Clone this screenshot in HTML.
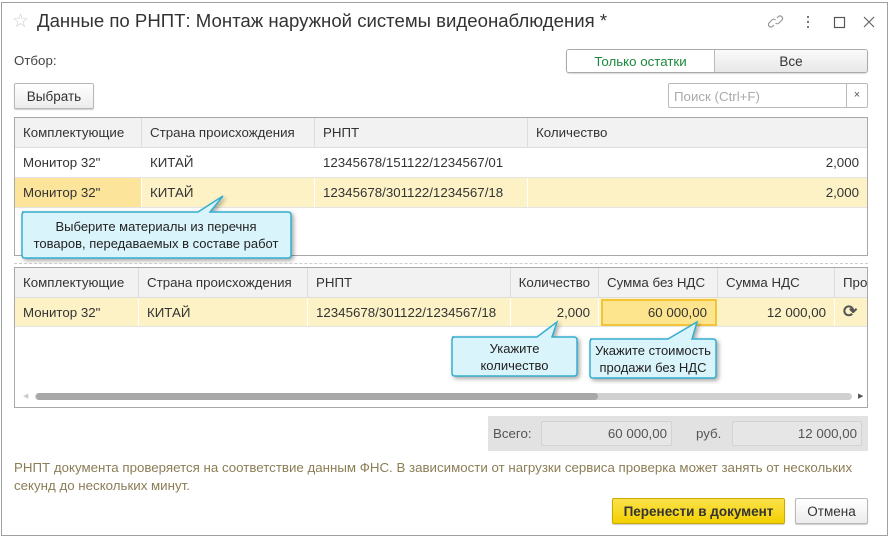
<!DOCTYPE html>
<html><head><meta charset="utf-8"><style>
*{margin:0;padding:0;box-sizing:border-box}
body{width:891px;height:539px;background:#fff;font-family:"Liberation Sans",Arial,sans-serif;font-size:13.3px;color:#333;position:relative;overflow:hidden}
.a{position:absolute;white-space:nowrap}
.win{position:absolute;left:1px;top:2px;width:887px;height:534px;border:1px solid #a0a0a0;background:#fff}
.tbl{position:absolute;border:1px solid #a8a8a8;background:#fff}
.hd{position:absolute;background:#f2f2f2;border-bottom:1px solid #ddd}
.cell{position:absolute;height:100%;border-right:1px solid #ddd;padding-left:8px;display:flex;align-items:center}
.r{justify-content:flex-end;padding-right:8px;padding-left:0}
.row{position:absolute;left:0;right:0;border-bottom:1px solid #e4e4e4}
.btn{position:absolute;border:1px solid #b8b8b8;border-radius:2px;background:linear-gradient(#fff,#ececec);box-shadow:0 1px 1px rgba(0,0,0,.2);display:flex;align-items:center;justify-content:center;font-size:13.5px;color:#333}
</style></head><body>
<div class="win"></div>
<div class="a" style="left:12px;top:10px;font-size:19px;color:#ccc">☆</div>
<div class="a" style="left:37px;top:10px;font-size:18.6px;color:#333">Данные по РНПТ: Монтаж наружной системы видеонаблюдения *</div>
<svg class="a" style="left:768px;top:12px" width="110" height="20" viewBox="0 0 110 20">
<g fill="none" stroke="#999" stroke-width="1.2"><path d="M6 13 l-1.5 1.5 a2.5 2.5 0 0 1 -3.5 -3.5 l3 -3 a2.5 2.5 0 0 1 3.5 0 M9 6 l1.5 -1.5 a2.5 2.5 0 0 1 3.5 3.5 l-3 3 a2.5 2.5 0 0 1 -3.5 0"/>
<rect x="66.5" y="5.5" width="10" height="10" stroke="#555"/><path d="M96 5 l10 10 M106 5 l-10 10" stroke="#666"/></g>
<g fill="#777"><rect x="39" y="4" width="2" height="2"/><rect x="39" y="9" width="2" height="2"/><rect x="39" y="14" width="2" height="2"/></g></svg>
<div class="a" style="left:14px;top:53px;color:#444">Отбор:</div>
<div class="a" style="left:566px;top:49px;width:302px;height:24px;border:1px solid #aaa;border-radius:3px;box-shadow:0 1px 1px rgba(0,0,0,.15);overflow:hidden;display:flex">
<div style="width:148px;background:#fff;color:#1a8a3c;display:flex;align-items:center;justify-content:center;border-right:1px solid #bbb">Только остатки</div>
<div style="flex:1;background:linear-gradient(#fafafa,#e8e8e8);display:flex;align-items:center;justify-content:center;font-size:13.5px">Все</div></div>
<div class="btn" style="left:14px;top:83px;width:80px;height:26px">Выбрать</div>
<div class="a" style="left:668px;top:83px;width:200px;height:25px;border:1px solid #bbb;border-radius:2px;background:#fff"><span style="position:absolute;left:5px;top:5px;color:#aaa">Поиск (Ctrl+F)</span><span style="position:absolute;left:177px;top:0;width:21px;height:23px;border-left:1px solid #bbb;text-align:center;line-height:22px;font-size:11px;color:#555">×</span></div>

<div class="tbl" style="left:14px;top:117px;width:854px;height:139px">
<div class="hd" style="left:0;right:0;top:0;height:30px"><div class="cell" style="left:0;width:127px">Комплектующие</div><div class="cell" style="left:127px;width:173px">Страна происхождения</div><div class="cell" style="left:300px;width:213px">РНПТ</div><div class="cell" style="left:513px;width:339px;border-right:0">Количество</div></div>
<div class="row" style="top:30px;height:30px"><div class="cell" style="left:0;width:127px;border:0">Монитор 32"</div><div class="cell" style="left:127px;width:173px;border:0">КИТАЙ</div><div class="cell" style="left:300px;width:213px;border:0">12345678/151122/1234567/01</div><div class="cell r" style="left:513px;width:339px;border:0">2,000</div></div>
<div class="row" style="top:60px;height:30px;background:#fdf2c6"><div class="cell" style="left:0;width:127px;background:#fce49a;border-color:#fff">Монитор 32"</div><div class="cell" style="left:127px;width:173px;border-color:#fff">КИТАЙ</div><div class="cell" style="left:300px;width:213px;border-color:#fff">12345678/301122/1234567/18</div><div class="cell r" style="left:513px;width:339px;border:0">2,000</div></div>
</div>
<svg class="a" style="left:18px;top:192px" width="280" height="72"><path d="M4 20 H180 L205 4 L192 20 H270 Q273 20 273 23 V63 Q273 66 270 66 H7 Q4 66 4 63 V23 Q4 20 7 20Z" fill="#daf4fb" stroke="#35aed0" stroke-width="1.5" style="filter:drop-shadow(2px 2px 2px rgba(0,0,0,.35))"/></svg>
<div class="a" style="left:22px;top:218px;width:268px;text-align:center;line-height:17px;font-size:13px;color:#222">Выберите материалы из перечня<br>товаров, передаваемых в составе работ</div>
<div class="a" style="left:14px;top:263px;width:854px;border-top:1px dashed #ccc"></div>

<div class="tbl" style="left:14px;top:267px;width:854px;height:141px;overflow:hidden">
<div class="hd" style="left:0;right:0;top:0;height:30px"><div class="cell" style="left:0;width:124px">Комплектующие</div><div class="cell" style="left:124px;width:169px">Страна происхождения</div><div class="cell" style="left:293px;width:203px">РНПТ</div><div class="cell r" style="left:496px;width:88px">Количество</div><div class="cell" style="left:584px;width:119px">Сумма без НДС</div><div class="cell" style="left:703px;width:117px">Сумма НДС</div><div class="cell" style="left:820px;width:40px;border:0">Про</div></div>
<div class="row" style="top:30px;height:29px;background:#fdf2c6"><div class="cell" style="left:0;width:124px;border-color:#fff">Монитор 32"</div><div class="cell" style="left:124px;width:169px;border-color:#fff">КИТАЙ</div><div class="cell" style="left:293px;width:203px;border-color:#fff">12345678/301122/1234567/18</div><div class="cell r" style="left:496px;width:88px;border-color:#fff">2,000</div><div class="cell r" style="left:586px;width:116px;height:27px;top:1px;background:#fde58e;border:2px solid #f2c43a">60 000,00</div><div class="cell r" style="left:703px;width:117px;border-color:#fff">12 000,00</div><div class="cell" style="left:820px;width:30px;border:0;font-size:17px;color:#555;font-weight:bold">⟳</div></div>
<div style="position:absolute;left:20px;top:125px;width:817px;height:7px;border-radius:4px;background:#d0d0d0"></div>
<div style="position:absolute;left:21px;top:125px;width:562px;height:7px;border-radius:4px;background:#a8a8a8"></div>
<div style="position:absolute;left:8px;top:124px;font-size:7px;color:#ccc">◀</div><div style="position:absolute;left:843px;top:124px;font-size:7px;color:#555">▶</div>
</div>
<svg class="a" style="left:448px;top:318px" width="140" height="66"><path d="M4 19 H89 L109 4 L104 19 H126 Q129 19 129 22 V55 Q129 58 126 58 H7 Q4 58 4 55 V22 Q4 19 7 19Z" fill="#daf4fb" stroke="#35aed0" stroke-width="1.5" style="filter:drop-shadow(2px 2px 2px rgba(0,0,0,.35))"/></svg>
<div class="a" style="left:452px;top:340px;width:125px;text-align:center;line-height:17px;font-size:13px;color:#222">Укажите<br>количество</div>
<svg class="a" style="left:586px;top:318px" width="140" height="66"><path d="M4 21 H82 L111 4 L106 21 H127 Q130 21 130 24 V57 Q130 60 127 60 H7 Q4 60 4 57 V24 Q4 21 7 21Z" fill="#daf4fb" stroke="#35aed0" stroke-width="1.5" style="filter:drop-shadow(2px 2px 2px rgba(0,0,0,.35))"/></svg>
<div class="a" style="left:590px;top:342px;width:126px;text-align:center;line-height:17px;font-size:13px;color:#222">Укажите стоимость<br>продажи без НДС</div>

<div class="a" style="left:488px;top:416px;width:380px;height:35px;background:#e2e2e2"></div>
<div class="a" style="left:493px;top:426px;color:#555">Всего:</div>
<div class="a" style="left:541px;top:421px;width:131px;height:25px;border:1px solid #d2d2d2;border-radius:2px;background:#e6e6e6;text-align:right;padding:4px 4px 0 0;color:#555">60 000,00</div>
<div class="a" style="left:696px;top:426px;color:#555">руб.</div>
<div class="a" style="left:732px;top:421px;width:130px;height:25px;border:1px solid #d2d2d2;border-radius:2px;background:#e6e6e6;text-align:right;padding:4px 4px 0 0;color:#555">12 000,00</div>
<div class="a" style="left:14px;top:459px;line-height:18px;color:#8b7d55">РНПТ документа проверяется на соответствие данным ФНС. В зависимости от нагрузки сервиса проверка может занять от нескольких<br>секунд до нескольких минут.</div>
<div class="btn" style="left:612px;top:498px;width:173px;height:26px;background:linear-gradient(#fbe24a,#f3d000);border-color:#c9a800;font-weight:bold;color:#333">Перенести в документ</div>
<div class="btn" style="left:795px;top:498px;width:73px;height:26px">Отмена</div>
</body></html>
